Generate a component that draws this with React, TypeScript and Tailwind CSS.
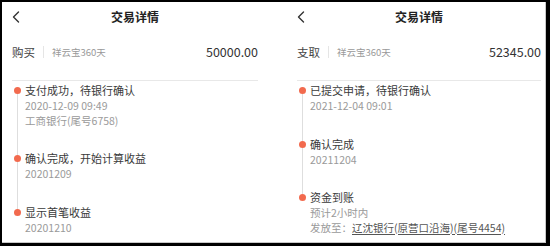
import React from 'react';

interface Step {
  title: string;
  lines: React.ReactNode[];
}

interface Panel {
  type: string;
  product: string;
  amount: string;
  width: string;
  steps: Step[];
}

const panels: Panel[] = [
  {
    type: '购买',
    product: '祥云宝360天',
    amount: '50000.00',
    width: 'w-[246px] ml-[10px]',
    steps: [
      { title: '支付成功，待银行确认', lines: ['2020-12-09 09:49', '工商银行(尾号6758)'] },
      { title: '确认完成，开始计算收益', lines: ['20201209'] },
      { title: '显示首笔收益', lines: ['20201210'] },
    ],
  },
  {
    type: '支取',
    product: '祥云宝360天',
    amount: '52345.00',
    width: 'w-[244px] ml-[39px]',
    steps: [
      { title: '已提交申请，待银行确认', lines: ['2021-12-04 09:01'] },
      { title: '确认完成', lines: ['20211204'] },
      {
        title: '资金到账',
        lines: [
          '预计2小时内',
          <span key="bank">
            发放至：<span className="text-[#555] underline underline-offset-2">辽沈银行(原营口沿海)(尾号4454)</span>
          </span>,
        ],
      },
    ],
  },
];

function Chevron() {
  return (
    <svg width="8" height="12" viewBox="0 0 8 12" fill="none" stroke="#333" strokeWidth="1.4" strokeLinecap="round" strokeLinejoin="round">
      <path d="M6.5 1 L1.5 6 L6.5 11" />
    </svg>
  );
}

function DetailPanel({ panel }: { panel: Panel }) {
  return (
    <div className={`${panel.width} flex flex-col`}>
      {/* 헤더 */}
      <div className="h-[30px] flex items-center">
        <div className="w-[24px] flex items-center">
          <Chevron />
        </div>
        <div className="flex-1 text-center text-[12px] font-semibold text-[#222]">交易详情</div>
        <div className="w-[24px]" />
      </div>

      {/* 금액 행 */}
      <div className="pt-[12px] pb-[20px] border-b border-[#e8e8e8] flex items-center justify-between">
        <div className="flex items-center leading-[16px]">
          <span className="text-[11.5px] text-[#444]">{panel.type}</span>
          <span className="mx-[8px] w-px h-[12px] bg-[#e5e5e5]" />
          <span className="text-[9.5px] text-[#999]">{panel.product}</span>
        </div>
        <span className="text-[12.5px] text-[#333] leading-[16px]">{panel.amount}</span>
      </div>

      {/* 타임라인 */}
      <div className="pt-px">
        {panel.steps.map((step, idx) => {
          const first = idx === 0;
          const last = idx === panel.steps.length - 1;
          return (
            <div key={idx} className="flex">
              <div className="w-[13px] flex flex-col items-center shrink-0 ml-[-1px]">
                <div className={`w-px h-[5px] ${first ? '' : 'bg-[#dedede]'}`} />
                <div className="w-[7px] h-[7px] rounded-full bg-[#f26a4e]" />
                <div className={`w-px flex-1 ${last ? '' : 'bg-[#dedede]'}`} />
              </div>
              <div className={`ml-[1px] ${last ? '' : 'pb-[22px]'}`}>
                <div className="text-[11px] leading-[17px] text-[#3a3a3a]">{step.title}</div>
                {step.lines.map((line, i) => (
                  <div key={i} className="text-[10.5px] leading-[14.5px] text-[#9a9a9a]">{line}</div>
                ))}
              </div>
            </div>
          );
        })}
      </div>
    </div>
  );
}

export default function App() {
  return (
    <div
      className="w-[550px] h-[246px] bg-white border-l-2 border-t-2 border-r-4 border-b-[3px] border-black overflow-hidden"
      style={{ fontFamily: '"Noto Sans CJK SC", "Noto Sans", sans-serif' }}
    >
      <div className="h-full flex border-r border-b border-[#c8c8c8]">
        {panels.map((p, i) => (
          <DetailPanel key={i} panel={p} />
        ))}
      </div>
    </div>
  );
}
